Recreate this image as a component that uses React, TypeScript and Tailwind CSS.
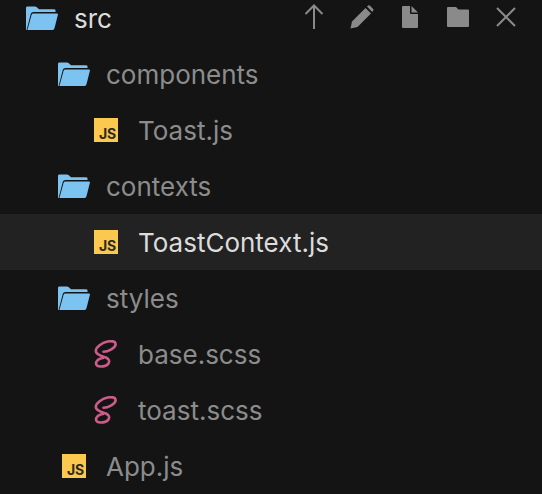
function FolderIcon() {
  return (
    <svg width="32" height="24" viewBox="0 0 32 24" className="shrink-0">
      <path d="M0 24 V1.8 Q0 0.5 1.5 0.5 H9 Q10 0.5 10.8 1.3 L13 3.2 H28 Q29.5 3.2 29.5 4.6 V6 H7.5 Q5.4 6 4.8 7.8 L0.6 24 Z" fill="#7cc3f2" />
      <path d="M1.4 24 L5.6 8.8 Q6 7.4 7.4 7.4 H31 Q32.2 7.4 31.9 8.8 L28.4 22.6 Q28 24 26.6 24 Z" fill="#7cc3f2" />
    </svg>
  );
}

function JsIcon() {
  return (
    <div className="relative h-6 w-6 shrink-0 bg-[#fbc94f]">
      <span className="absolute right-[2px] bottom-0 text-[14px] leading-[16px] font-bold tracking-[-0.2px] text-[#2b2a20]">
        JS
      </span>
    </div>
  );
}

function SassIcon() {
  return (
    <svg width="24" height="28" viewBox="0 0 24 28" fill="none" className="shrink-0">
      <path
        d="M9.5 11.8 C14 11.8 21.8 8 21.6 4 C21.4 1 17 0.8 13.5 1.6 C8 2.8 1.8 6.8 1.8 11 C1.8 15 8 15.8 12 17.5 C15 19 15.8 21 14.5 23.5 C12.5 26.5 5.5 27.5 3 25.5 C1 23.5 2.5 20 6 18.8 C7 18.4 8 18.2 9 18"
        stroke="#cd5c8a"
        strokeWidth="2.6"
        strokeLinecap="round"
      />
    </svg>
  );
}

type RowProps = {
  depth: number;
  label: string;
  icon: "folder" | "js" | "sass";
  active?: boolean;
  root?: boolean;
};

function Row({ depth, label, icon, active, root }: RowProps) {
  const color = active || root ? "text-[#dcdcdc]" : "text-[#8c8c8c]";
  return (
    <div className={`flex h-14 items-center ${active ? "bg-[#222222]" : ""}`}>
      <div className="flex w-[58px] shrink-0 justify-end" style={{ marginLeft: depth * 32 }}>
        <div className="flex w-8 justify-center">
          {icon === "folder" && <FolderIcon />}
          {icon === "js" && <JsIcon />}
          {icon === "sass" && <SassIcon />}
        </div>
      </div>
      <span className={`ml-4 pt-[2px] text-[26px] leading-none ${color}`}>{label}</span>
    </div>
  );
}

function Toolbar() {
  return (
    <div className="absolute top-[3px] right-[12px] flex text-[#8a8a8a]">
      <div className="flex h-7 w-12 items-center justify-center">
        <svg width="20" height="26" viewBox="0 0 20 26" fill="none" stroke="currentColor" strokeWidth="2">
          <path d="M10 25 V2 M1.5 10 L10 1.5 L18.5 10" />
        </svg>
      </div>
      <div className="flex h-7 w-12 items-center justify-center">
        <svg width="24" height="24" viewBox="0 0 24 24" fill="currentColor">
          <path d="M0.5 23.5 L2 16.5 L15.5 3 L21 8.5 L7.5 22 Z" />
          <path d="M17 1.6 L18.2 0.6 Q19 0 19.8 0.6 L23.2 4 Q24 4.8 23.2 5.6 L22.3 6.9 Z" />
        </svg>
      </div>
      <div className="flex h-7 w-12 items-center justify-center">
        <svg width="16" height="22" viewBox="0 0 16 22" fill="currentColor">
          <path d="M0 1 Q0 0 1 0 H8 V7 Q8 8 9 8 H16 V21 Q16 22 15 22 H1 Q0 22 0 21 Z" />
          <path d="M9.5 0 L16 6.5 H9.5 Z" />
        </svg>
      </div>
      <div className="flex h-7 w-12 items-center justify-center">
        <svg width="22" height="20" viewBox="0 0 22 20" fill="currentColor">
          <path d="M0 1 Q0 0 1 0 H9 L11.5 2.5 H21 Q22 2.5 22 3.5 V19 Q22 20 21 20 H1 Q0 20 0 19 Z" />
        </svg>
      </div>
      <div className="flex h-7 w-12 items-center justify-center">
        <svg width="20" height="20" viewBox="0 0 20 20" fill="none" stroke="currentColor" strokeWidth="2">
          <path d="M1 1 L19 19 M19 1 L1 19" />
        </svg>
      </div>
    </div>
  );
}

export default function App() {
  return (
    <div className="relative h-[494px] w-[542px] overflow-hidden bg-[#141414] font-['Inter',sans-serif]">
      <Toolbar />
      <div className="-mt-[10px]">
        <Row depth={0} label="src" icon="folder" root />
        <Row depth={1} label="components" icon="folder" />
        <Row depth={2} label="Toast.js" icon="js" />
        <Row depth={1} label="contexts" icon="folder" />
        <Row depth={2} label="ToastContext.js" icon="js" active />
        <Row depth={1} label="styles" icon="folder" />
        <Row depth={2} label="base.scss" icon="sass" />
        <Row depth={2} label="toast.scss" icon="sass" />
        <Row depth={1} label="App.js" icon="js" />
      </div>
    </div>
  );
}
